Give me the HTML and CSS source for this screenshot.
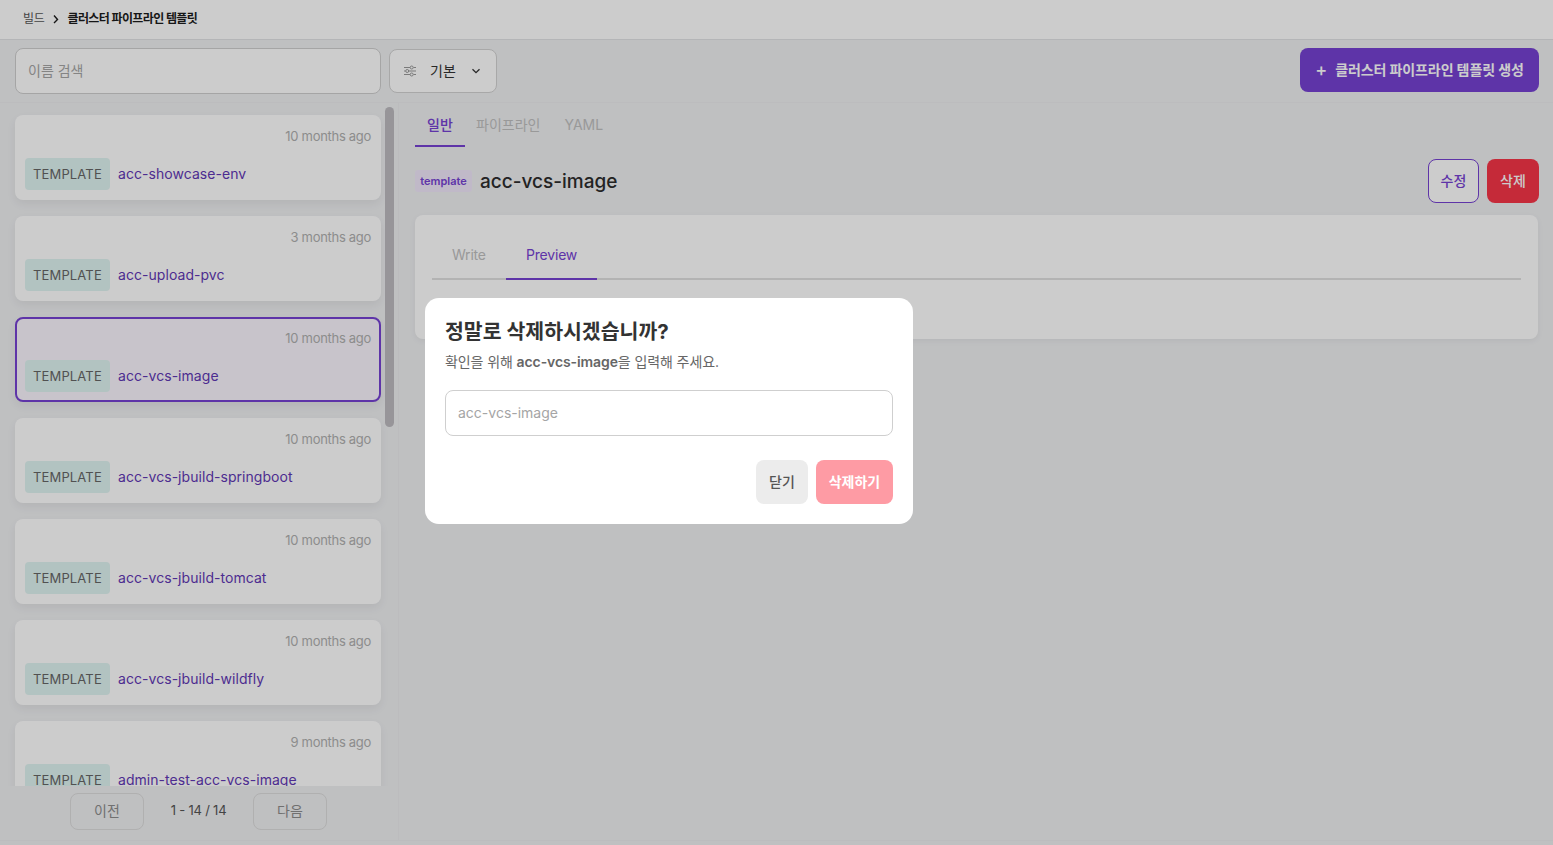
FILE: index.html
```html
<!DOCTYPE html>
<html lang="ko">
<head>
  <meta charset="utf-8">
  <title>클러스터 파이프라인 템플릿</title>
  <link rel="stylesheet" href="styles.css">
</head>
<body>
  <header class="crumbs">
    <span class="crumb">빌드</span>
    <svg class="crumb-sep" width="8" height="10" viewBox="0 0 8 10"><path d="M2 1.5 5.5 5.5 2 9" fill="none" stroke="#1c1c1c" stroke-width="1.4"/></svg>
    <span class="crumb-now">클러스터 파이프라인 템플릿</span>
  </header>

  <div class="toolbar">
    <input class="search" type="text" placeholder="이름 검색">
    <button class="sort">
      <svg class="sort-icon" width="14" height="12" viewBox="0 0 14 12" fill="none" stroke="#999" stroke-width="1">
        <path d="M1 2.5h6M10.5 2.5H13M1 6h1.500M6 6h7M1 9.500h6M10.500 9.500H13"/>
        <circle cx="8.700" cy="2.500" r="1.500"/><circle cx="4.200" cy="6" r="1.500"/><circle cx="8.700" cy="9.500" r="1.500"/>
      </svg>
      <span class="sort-label">기본</span>
      <svg width="10" height="6" viewBox="0 0 10 6"><path d="M1.500 1.200 5 4.700 8.500 1.200" fill="none" stroke="#333" stroke-width="1.300"/></svg>
    </button>
    <button class="create"><span class="plus">+</span>클러스터 파이프라인 템플릿 생성</button>
  </div>

  <main class="content">
    <aside class="side">
      <div class="list">
        <div class="card">
          <div class="card-time">10 months ago</div>
          <div class="card-row"><span class="kind">TEMPLATE</span><span class="card-name">acc-showcase-env</span></div>
        </div>
        <div class="card">
          <div class="card-time">3 months ago</div>
          <div class="card-row"><span class="kind">TEMPLATE</span><span class="card-name">acc-upload-pvc</span></div>
        </div>
        <div class="card selected">
          <div class="card-time">10 months ago</div>
          <div class="card-row"><span class="kind">TEMPLATE</span><span class="card-name">acc-vcs-image</span></div>
        </div>
        <div class="card">
          <div class="card-time">10 months ago</div>
          <div class="card-row"><span class="kind">TEMPLATE</span><span class="card-name">acc-vcs-jbuild-springboot</span></div>
        </div>
        <div class="card">
          <div class="card-time">10 months ago</div>
          <div class="card-row"><span class="kind">TEMPLATE</span><span class="card-name">acc-vcs-jbuild-tomcat</span></div>
        </div>
        <div class="card">
          <div class="card-time">10 months ago</div>
          <div class="card-row"><span class="kind">TEMPLATE</span><span class="card-name">acc-vcs-jbuild-wildfly</span></div>
        </div>
        <div class="card">
          <div class="card-time">9 months ago</div>
          <div class="card-row"><span class="kind">TEMPLATE</span><span class="card-name">admin-test-acc-vcs-image</span></div>
        </div>
        <div class="scroll-thumb"></div>
      </div>
      <div class="pager">
        <button class="page-btn">이전</button>
        <span class="page-info">1 - 14 / 14</span>
        <button class="page-btn">다음</button>
      </div>
    </aside>

    <section class="detail">
      <nav class="tabs">
        <a class="tab active">일반</a>
        <a class="tab">파이프라인</a>
        <a class="tab">YAML</a>
      </nav>
      <div class="title-row">
        <span class="tag">template</span>
        <h2 class="title">acc-vcs-image</h2>
        <button class="btn-edit">수정</button>
        <button class="btn-delete">삭제</button>
      </div>
      <div class="panel">
        <div class="panel-tabs">
          <a class="panel-tab">Write</a>
          <a class="panel-tab active">Preview</a>
        </div>
      </div>
    </section>
  </main>

  <div class="overlay"></div>
  <div class="modal">
    <h3 class="modal-title">정말로 삭제하시겠습니까?</h3>
    <p class="modal-text">확인을 위해 <b>acc-vcs-image</b>을 입력해 주세요.</p>
    <input class="modal-input" type="text" placeholder="acc-vcs-image">
    <div class="modal-actions">
      <button class="btn-close">닫기</button>
      <button class="btn-confirm">삭제하기</button>
    </div>
  </div>
</body>
</html>
```

FILE: styles.css
```css
* {
  box-sizing: border-box;
}

html,
body {
  height: 100%;
}

body {
  margin: 0;
  height: 845px;
  display: flex;
  flex-direction: column;
  overflow: hidden;
  background-color: #eff0f2;
  color: #333;
  font-family: Inter, "Noto Sans CJK KR", sans-serif;
}

button,
input {
  font-family: inherit;
}

/* breadcrumb */
.crumbs {
  height: 40px;
  flex: none;
  display: flex;
  align-items: center;
  padding: 0 23px 4px;
  background-color: #fff;
  border-bottom: 1px solid #e2e3e5;
  font-size: 12px;
}

.crumb {
  color: #555;
  letter-spacing: -0.3px;
}

.crumb-sep {
  margin: 2px 7px 0 8px;
}

.crumb-now {
  color: #1c1c1c;
  font-weight: 700;
  letter-spacing: -0.6px;
}

/* toolbar */
.toolbar {
  height: 63px;
  flex: none;
  display: flex;
  align-items: flex-start;
  padding: 8px 14px 0 15px;
  border-bottom: 1px solid #ebecee;
}

.search {
  width: 366px;
  height: 46px;
  padding: 0 12px 2px;
  background-color: #fff;
  border: 1px solid #cfcfcf;
  border-radius: 8px;
  font-size: 14px;
}

.search::placeholder,
.modal-input::placeholder {
  color: #a5a5a5;
  opacity: 1;
}

.sort {
  width: 108px;
  height: 44px;
  margin: 1px 0 0 8px;
  display: flex;
  align-items: center;
  padding: 0 0 0 13px;
  background-color: #fff;
  border: 1px solid #d2d2d2;
  border-radius: 8px;
}

.sort-label {
  margin: 0 15px 2px 13px;
  font-size: 14px;
  color: #333;
}

.create {
  width: 239px;
  height: 44px;
  margin-left: auto;
  padding: 0 0 2px;
  background-color: #7642d3;
  color: #fff;
  border: none;
  border-radius: 8px;
  font-size: 14px;
  font-weight: 700;
  letter-spacing: -0.1px;
}

.plus {
  margin-right: 8px;
  font-size: 18px;
  font-weight: 500;
  line-height: 1;
  vertical-align: -1px;
}

/* main area */
.content {
  flex: 1;
  display: flex;
  min-height: 0;
  margin-bottom: 4px;
  border-bottom: 1px solid #ebecee;
}

.side {
  width: 399px;
  flex: none;
  display: flex;
  flex-direction: column;
  border-right: 1px solid #ebecee;
}

.list {
  height: 683px;
  flex: none;
  position: relative;
  display: flex;
  flex-direction: column;
  gap: 16px;
  padding: 12px 17px 0 15px;
  overflow: hidden;
}

.card {
  height: 85px;
  flex: none;
  padding: 13px 10px 0;
  background-color: #fff;
  border-radius: 8px;
  box-shadow: 0 4px 10px rgba(0, 0, 0, 0.06);
}

.card.selected {
  padding: 11px 8px 0;
  background-color: #faf6fe;
  border: 2px solid #7642d3;
}

.card-time {
  height: 16px;
  text-align: right;
  font-size: 13px;
  line-height: 16px;
  letter-spacing: -0.3px;
  color: #b0b0b0;
}

.card-row {
  display: flex;
  align-items: center;
  margin-top: 14px;
}

.kind {
  height: 32px;
  width: 85px;
  padding: 0 8px;
  background-color: #dff4f2;
  border-radius: 4px;
  font-size: 13px;
  line-height: 32px;
  letter-spacing: 0.15px;
  color: #666;
}

.card-name {
  margin-left: 8px;
  padding-bottom: 2px;
  font-size: 14px;
  letter-spacing: 0.05px;
  color: #5f38b5;
}

.scroll-thumb {
  position: absolute;
  left: 385px;
  top: 4px;
  width: 9px;
  height: 320px;
  background-color: #bdbbc0;
  border-radius: 5px;
}

.pager {
  flex: 1;
  display: flex;
  align-items: flex-start;
  padding: 7px 0 0 70px;
}

.page-btn {
  width: 74px;
  height: 37px;
  padding: 0 0 3px;
  background: transparent;
  border: 1px solid #dcdcdc;
  border-radius: 8px;
  font-size: 14px;
  color: #8c8c8c;
}

.page-info {
  width: 109px;
  padding-top: 9px;
  text-align: center;
  font-size: 13px;
  letter-spacing: -0.2px;
  color: #555;
}

/* detail */
.detail {
  flex: 1;
  min-width: 0;
  padding: 0 15px 0 16px;
}

.tabs {
  display: flex;
  height: 44px;
}

.tab {
  height: 44px;
  padding: 12px 12px 0;
  font-size: 14px;
  line-height: 20px;
  color: #c0c0c0;
}

.tab.active {
  width: 50px;
  margin-right: -1px;
  color: #7642d3;
  border-bottom: 2px solid #7642d3;
  font-weight: 500;
}

.title-row {
  display: flex;
  align-items: center;
  height: 44px;
  margin-top: 12px;
  margin-right: -1px;
}

.tag {
  width: 57px;
  height: 22px;
  text-align: center;
  background-color: #f1e8fb;
  border-radius: 3px;
  font-size: 11px;
  font-weight: 600;
  line-height: 22px;
  color: #7642d3;
}

.title {
  flex: 1;
  margin: 0 0 0 8px;
  font-size: 19px;
  font-weight: 500;
  color: #2c2c2c;
}

.btn-edit {
  width: 51px;
  height: 44px;
  padding: 0 0 2px;
  background-color: #fff;
  border: 1px solid #7642d3;
  border-radius: 8px;
  font-size: 14px;
  font-weight: 500;
  color: #7642d3;
}

.btn-delete {
  width: 52px;
  height: 44px;
  margin-left: 8px;
  padding: 0 0 2px;
  background-color: #f73548;
  border: none;
  border-radius: 8px;
  font-size: 14px;
  font-weight: 500;
  color: #fff;
}

.panel {
  height: 124px;
  margin-top: 12px;
  padding: 17px 17px 0;
  background-color: #fff;
  border-radius: 8px;
  box-shadow: 0 2px 6px rgba(0, 0, 0, 0.05);
}

.panel-tabs {
  display: flex;
  height: 48px;
  border-bottom: 2px solid #e0e0e0;
}

.panel-tab {
  width: 74px;
  height: 48px;
  padding: 14px 20px 0;
  font-size: 14px;
  letter-spacing: -0.2px;
  color: #c0c0c0;
}

.panel-tab.active {
  width: 91px;
  color: #7642d3;
  border-bottom: 2px solid #7642d3;
}

/* delete dialog */
.overlay {
  position: fixed;
  inset: 0;
  background-color: rgba(0, 0, 0, 0.2);
}

.modal {
  position: fixed;
  left: 425px;
  top: 298px;
  width: 488px;
  height: 226px;
  padding: 20px;
  background-color: #fff;
  border-radius: 14px;
}

.modal-title {
  margin: 1px 0 0;
  font-size: 20.5px;
  font-weight: 700;
  line-height: 26px;
  color: #333;
}

.modal-text {
  margin: 6px 0 0;
  font-size: 14px;
  line-height: 22px;
  letter-spacing: -0.1px;
  color: #666;
}

.modal-input {
  display: block;
  width: 100%;
  height: 46px;
  margin-top: 17px;
  padding: 0 12px 2px;
  border: 1px solid #cfcfcf;
  border-radius: 8px;
  font-size: 14px;
}

.modal-text b {
  font-weight: 600;
}

.modal-actions {
  display: flex;
  justify-content: flex-end;
  gap: 8px;
  margin-top: 24px;
}

.btn-close {
  width: 52px;
  height: 44px;
  padding: 0 0 2px;
  background-color: #ececec;
  border: none;
  border-radius: 8px;
  font-size: 14px;
  font-weight: 500;
  color: #555;
}

.btn-confirm {
  width: 77px;
  height: 44px;
  padding: 0 0 2px;
  background-color: #fe9ba4;
  border: none;
  border-radius: 8px;
  font-size: 14px;
  font-weight: 700;
  color: #fff;
}
```
